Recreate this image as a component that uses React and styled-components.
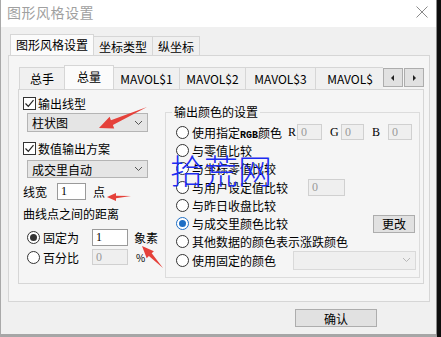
import React from "react";
import styled, { createGlobalStyle } from "styled-components";

const GlobalStyle = createGlobalStyle`
  html, body { margin: 0; padding: 0; background: #0e0e0e; }
  body {
    width: 441px;
    height: 337px;
    overflow: hidden;
    font-family: "Noto Sans CJK SC", "Noto Sans", sans-serif;
    font-size: 12px;
    color: #000;
  }
`;

const Stage = styled.div`
  position: relative;
  width: 441px;
  height: 337px;
`;

const Window = styled.div`
  width: 437px;
  height: 337px;
  box-sizing: border-box;
  background: #f0f0f0;
  border-left: 1px solid #a9a9a9;
  border-right: 1px solid #8c8c8c;
  border-bottom: 3px solid #a6a6a6;
  display: flex;
  flex-direction: column;
`;

const TitleBar = styled.div`
  height: 27px;
  flex-shrink: 0;
  background: #fff;
  display: flex;
  align-items: center;
  justify-content: space-between;
  padding: 0 8px 3px 6px;
  box-sizing: border-box;
`;

const Title = styled.span`
  font-size: 14px;
  color: #a0a0a0;
  letter-spacing: 0.5px;
`;

const Content = styled.div`
  padding: 0 6px 0 7px;
`;

const TabStrip = styled.div`
  display: flex;
  align-items: flex-end;
  height: ${(p) => p.$h}px;
  padding-left: ${(p) => p.$pad}px;
  overflow: hidden;
  flex-shrink: 0;
`;

const Tab = styled.div`
  height: ${(p) => (p.$active ? p.$h + 2 : p.$h)}px;
  min-width: ${(p) => p.$w || 0}px;
  padding: 0 5px;
  box-sizing: border-box;
  display: flex;
  align-items: center;
  justify-content: ${(p) => (p.$w ? "center" : "flex-start")};
  border: 1px solid #d6d6d6;
  border-bottom: none;
  margin-right: -1px;
  background: ${(p) => (p.$active ? "#fbfbfb" : "#f0f0f0")};
  white-space: nowrap;
  flex-shrink: 0;
  position: relative;
  z-index: ${(p) => (p.$active ? 1 : 0)};
  padding-bottom: ${(p) => (p.$active ? 2 : 0)}px;
`;

const OuterPanel = styled.div`
  height: 247px;
  box-sizing: border-box;
  border: 1px solid #d6d6d6;
  background: #f5f5f5;
  padding: 9px 0 0 9px;
`;

const InnerTabRow = styled.div`
  display: flex;
  align-items: flex-end;
  height: 24px;
`;

const InnerTabs = styled(TabStrip)`
  width: 364px;
`;

const ScrollBtn = styled.div`
  width: 20px;
  height: 19px;
  box-sizing: border-box;
  border: 1px solid #adadad;
  background: #e1e1e1;
  margin: 0 1px 2px 0;
  display: flex;
  align-items: center;
  justify-content: center;
  flex-shrink: 0;
`;

const InnerPanel = styled.div`
  width: 406px;
  height: 195px;
  box-sizing: border-box;
  border: 1px solid #d6d6d6;
  background: #f5f5f5;
  display: flex;
`;

const LeftCol = styled.div`
  width: 146px;
  flex-shrink: 0;
  box-sizing: border-box;
  padding: 5px 0 0 4px;
  display: flex;
  flex-direction: column;
`;

const Row = styled.div`
  display: flex;
  align-items: center;
  height: ${(p) => p.$h || 16}px;
  margin-top: ${(p) => p.$mt || 0}px;
  margin-left: ${(p) => p.$ml || 0}px;
  white-space: nowrap;
  flex-shrink: 0;
`;

const Box = styled.span`
  width: 13px;
  height: 13px;
  box-sizing: border-box;
  border: 1px solid #333;
  background: #fff;
  display: inline-flex;
  align-items: center;
  justify-content: center;
  flex-shrink: 0;
  margin-right: 2px;
`;

const RadioDot = styled.span`
  width: 13px;
  height: 13px;
  box-sizing: border-box;
  border-radius: 50%;
  border: 1px solid ${(p) => (p.$checked ? p.$dot : "#333")};
  background: #fff;
  display: inline-flex;
  align-items: center;
  justify-content: center;
  flex-shrink: 0;
  margin-right: 3px;
  &::after {
    content: "";
    width: 7px;
    height: 7px;
    border-radius: 50%;
    background: ${(p) => p.$dot};
    display: ${(p) => (p.$checked ? "block" : "none")};
  }
`;

const Select = styled.div`
  width: ${(p) => p.$w}px;
  height: ${(p) => p.$h}px;
  margin-top: ${(p) => p.$mt || 0}px;
  margin-left: ${(p) => p.$ml || 0}px;
  box-sizing: border-box;
  border: 1px solid ${(p) => (p.$disabled ? "#d9d9d9" : "#b4b4b4")};
  background: ${(p) => (p.$disabled ? "#efefef" : "#e5e5e5")};
  display: flex;
  align-items: center;
  justify-content: space-between;
  padding: 0 4px 0 4px;
  flex-shrink: 0;
`;

const Field = styled.div`
  width: ${(p) => p.$w}px;
  height: ${(p) => p.$h || 17}px;
  margin-left: ${(p) => p.$ml || 0}px;
  box-sizing: border-box;
  border: 1px solid ${(p) => (p.$disabled ? "#d0d0d0" : "#9a9a9a")};
  background: ${(p) => (p.$disabled ? "#efefef" : "#fff")};
  color: ${(p) => (p.$disabled ? "#9a9a9a" : "#000")};
  font-family: "Liberation Serif", serif;
  font-size: 12px;
  display: flex;
  align-items: center;
  padding-left: 3px;
  flex-shrink: 0;
`;

const Text = styled.span`
  margin-left: ${(p) => p.$ml || 0}px;
  font-family: ${(p) => (p.$serif ? '"Liberation Serif", serif' : "inherit")};
  font-size: ${(p) => p.$fs || 12}px;
  width: ${(p) => (p.$w ? `${p.$w}px` : "auto")};
  flex-shrink: 0;
`;

const Latin = styled.span`
  font-family: "Liberation Mono", monospace;
  font-size: 10px;
  font-weight: 700;
`;

const GroupBox = styled.div`
  position: relative;
  margin-top: 22px;
  width: 255px;
  height: 166px;
  box-sizing: border-box;
  border: 1px solid #dcdcdc;
  padding: 10px 3px 0 10px;
  display: flex;
  flex-direction: column;
`;

const Legend = styled.span`
  position: absolute;
  top: -10px;
  left: 6px;
  padding: 0 2px;
  background: #f5f5f5;
  line-height: 18px;
`;

const GroupRow = styled.div`
  display: flex;
  align-items: center;
  height: 18.3px;
  white-space: nowrap;
`;

const Button = styled.div`
  width: ${(p) => p.$w}px;
  height: 18px;
  box-sizing: border-box;
  border: 1px solid #adadad;
  background: #e1e1e1;
  display: flex;
  align-items: center;
  justify-content: center;
  margin-left: ${(p) => (p.$auto ? "auto" : "0")};
  margin-right: ${(p) => p.$mr || 0}px;
  flex-shrink: 0;
`;

const Footer = styled.div`
  display: flex;
  padding: 7px 0 0 287px;
`;

const Watermark = styled.div`
  position: absolute;
  left: 170px;
  top: 150px;
  font-size: 34px;
  line-height: 40px;
  font-weight: 300;
  color: #1c2cf0;
  pointer-events: none;
`;

const Annotations = styled.svg`
  position: absolute;
  left: 0;
  top: 0;
  pointer-events: none;
`;

const Chevron = ({ color = "#555" }) => (
  <svg width="9" height="6" viewBox="0 0 9 6">
    <path d="M1 1 L4.5 4.5 L8 1" fill="none" stroke={color} strokeWidth="1" />
  </svg>
);

const Check = () => (
  <svg width="11" height="11" viewBox="0 0 11 11">
    <path d="M1.5 5.5 L4.3 8.3 L9.5 2.2" fill="none" stroke="#222" strokeWidth="1.2" />
  </svg>
);

const CheckRow = ({ label, mt }) => (
  <Row $mt={mt}>
    <Box>
      <Check />
    </Box>
    <span>{label}</span>
  </Row>
);

const Radio = ({ label, checked, dot = "#333", children }) => (
  <GroupRow>
    <RadioDot $checked={checked} $dot={dot} />
    {label}
    {children}
  </GroupRow>
);

const innerTabs = [
  { label: "总手", w: 46 },
  { label: "总量", w: 50, active: true },
  { label: "MAVOL$1", w: 67 },
  { label: "MAVOL$2", w: 67 },
  { label: "MAVOL$3", w: 71 },
  { label: "MAVOL$", w: 70 },
];

export default function App() {
  return (
    <Stage>
      <GlobalStyle />
      <Window>
        <TitleBar>
          <Title>图形风格设置</Title>
          <svg width="12" height="12" viewBox="0 0 12 12">
            <path d="M0.5 0.5 L11.5 11.5 M11.5 0.5 L0.5 11.5" stroke="#8a8a8a" strokeWidth="1" />
          </svg>
        </TitleBar>
        <Content>
          <TabStrip $h={28} $pad={2}>
            <Tab $h={19} $active>图形风格设置</Tab>
            <Tab $h={19}>坐标类型</Tab>
            <Tab $h={19}>纵坐标</Tab>
          </TabStrip>
          <OuterPanel>
            <InnerTabRow>
              <InnerTabs $h={24} $pad={1}>
                {innerTabs.map((t) => (
                  <Tab key={t.label} $h={22} $w={t.w} $active={t.active}>
                    {t.label}
                  </Tab>
                ))}
              </InnerTabs>
              <ScrollBtn>
                <svg width="4" height="6" viewBox="0 0 4 6">
                  <path d="M3 0 L0 3 L3 6 Z" fill="#222" />
                </svg>
              </ScrollBtn>
              <ScrollBtn>
                <svg width="4" height="6" viewBox="0 0 4 6">
                  <path d="M1 0 L4 3 L1 6 Z" fill="#222" />
                </svg>
              </ScrollBtn>
            </InnerTabRow>
            <InnerPanel>
              <LeftCol>
                <CheckRow label="输出线型" />
                <Select $w={121} $h={19} $mt={2} $ml={4}>
                  <span>柱状图</span>
                  <Chevron />
                </Select>
                <CheckRow label="数值输出方案" mt={8} />
                <Select $w={121} $h={18} $mt={4} $ml={4}>
                  <span>成交里自动</span>
                  <Chevron />
                </Select>
                <Row $h={17} $mt={5}>
                  <span>线宽</span>
                  <Field $w={29} $ml={10}>1</Field>
                  <Text $ml={7}>点</Text>
                </Row>
                <Row $mt={5}>曲线点之间的距离</Row>
                <Row $h={18} $mt={7} $ml={4}>
                  <RadioDot $checked $dot="#333" />
                  <Text $w={48}>固定为</Text>
                  <Field $w={36} $ml={1}>1</Field>
                  <Text $ml={6}>象素</Text>
                </Row>
                <Row $h={18} $mt={2} $ml={4}>
                  <RadioDot />
                  <Text $w={48}>百分比</Text>
                  <Field $w={36} $h={16} $ml={1} $disabled>
                    0
                  </Field>
                  <Text $ml={8} $fs={10}>%</Text>
                </Row>
              </LeftCol>
              <GroupBox>
                <Legend>输出颜色的设置</Legend>
                <Radio
                  label={
                    <Text $w={91}>
                      使用指定<Latin>RGB</Latin>颜色
                    </Text>
                  }
                >
                  <Text $ml={5} $w={8} $serif>R</Text>
                  <Field $w={25} $h={16} $ml={1} $disabled>0</Field>
                  <Text $ml={8} $w={8} $serif>G</Text>
                  <Field $w={23} $h={16} $ml={3} $disabled>0</Field>
                  <Text $ml={8} $w={8} $serif>B</Text>
                  <Field $w={24} $h={16} $ml={8} $disabled>0</Field>
                </Radio>
                <Radio label="与零值比较" />
                <Radio label="与坐标零值比较" />
                <Radio label="与用户设定值比较">
                  <Field $w={37} $ml={20} $disabled>0</Field>
                </Radio>
                <Radio label="与昨日收盘比较" />
                <Radio label="与成交里颜色比较" checked dot="#1f6fc5">
                  <Button $w={42} $auto $mr={1}>更改</Button>
                </Radio>
                <Radio label="其他数据的颜色表示涨跌颜色" />
                <Radio label="使用固定的颜色">
                  <Select $w={123} $h={19} $ml={17} $disabled>
                    <span />
                    <Chevron color="#b8b8b8" />
                  </Select>
                </Radio>
              </GroupBox>
            </InnerPanel>
          </OuterPanel>
          <Footer>
            <Button $w={82}>确认</Button>
          </Footer>
        </Content>
      </Window>
      <Watermark>拾荒网</Watermark>
      <Annotations width="441" height="337" viewBox="0 0 441 337">
        <polygon
          points="147,107 112.9,124.9 114.2,128.5 99,128 109.6,116.8 110.9,120.3"
          fill="#e5413a"
        />
        <polygon points="131,196 116,198.2 116,201 107,197 116,193 116,195.8" fill="#e5413a" />
        <polygon
          points="163,268 151.7,253.3 153.9,251.2 142,246 146.7,258.2 148.9,256.1"
          fill="#e5413a"
        />
      </Annotations>
    </Stage>
  );
}
